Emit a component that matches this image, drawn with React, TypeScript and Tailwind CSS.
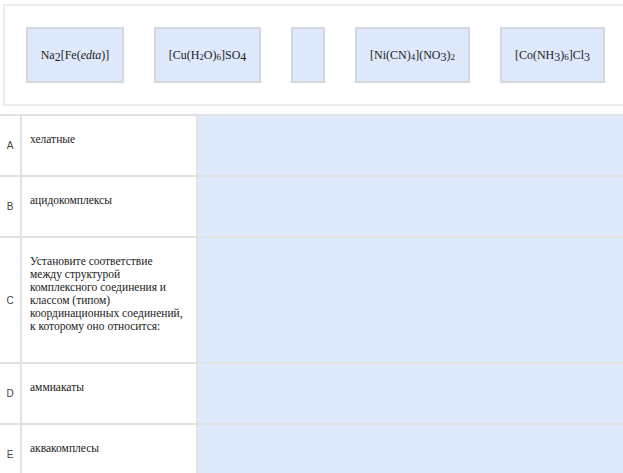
const serif = "font-['Liberation_Serif','Times_New_Roman',serif]";

type Row = { letter: string; lines: string[]; h: string };

const rows: Row[] = [
  { letter: "A", lines: ["хелатные"], h: "h-[61px]" },
  { letter: "B", lines: ["ацидокомплексы"], h: "h-[61px]" },
  {
    letter: "C",
    lines: [
      "Установите соответствие",
      "между структурой",
      "комплексного соединения и",
      "классом (типом)",
      "координационных соединений,",
      "к которому оно относится:",
    ],
    h: "h-[126px]",
  },
  { letter: "D", lines: ["аммиакаты"], h: "h-[61px]" },
  { letter: "E", lines: ["аквакомплесы"], h: "h-[61px]" },
];

function Chip({ w, children }: { w: string; children?: React.ReactNode }) {
  return (
    <div
      className={`${w} flex h-[56px] shrink-0 items-center justify-center border-2 border-[#d4d8de] bg-[#dee9fb] text-[12px] text-[#222] ${serif}`}
    >
      {children}
    </div>
  );
}

export default function App() {
  return (
    <div className="h-[473px] w-[623px] overflow-hidden bg-white">
      <div className="pl-[3px] pt-[4px]">
        <div className="flex h-[102px] items-center gap-[30px] border-2 border-r-0 border-[#ececec] pl-[21px]">
          <Chip w="w-[98px]">
            Na<span className="relative top-[2px]">2</span>[Fe(<i>edta</i>)]
          </Chip>
          <Chip w="w-[107px]">
            [Cu(H<sub className="text-[9px]">2</sub>O)<sub className="text-[9px]">6</sub>]SO<span className="relative top-[2px]">4</span>
          </Chip>
          <Chip w="w-[34px]" />
          <Chip w="w-[115px]">
            [Ni(CN)<sub className="text-[9px]">4</sub>](NO<span className="relative top-[2px]">3</span>)<sub className="text-[9px]">2</sub>
          </Chip>
          <Chip w="w-[105px]">
            [Co(NH<span className="relative top-[2px]">3</span>)<sub className="text-[9px]">6</sub>]Cl<span className="relative top-[2px]">3</span>
          </Chip>
        </div>
      </div>

      <div className="mt-[8px]">
        {rows.map((r) => (
          <div key={r.letter} className={`flex ${r.h} border-t-2 border-[#e2e2e2]`}>
            <div className="flex w-[22px] shrink-0 items-center justify-center border-r-2 border-[#e2e2e2] font-['Liberation_Sans',Arial,sans-serif] text-[10px] text-[#444]">
              {r.letter}
            </div>
            <div
              className={`w-[176px] shrink-0 whitespace-nowrap border-r-2 border-[#e2e2e2] pl-[8px] pr-[4px] pt-[17px] text-[11.5px] leading-[13px] text-[#222] ${serif}`}
            >
              {r.lines.map((l) => (
                <div key={l}>{l}</div>
              ))}
            </div>
            <div className="flex-1 bg-[#dee9fb]" />
          </div>
        ))}
      </div>
    </div>
  );
}
